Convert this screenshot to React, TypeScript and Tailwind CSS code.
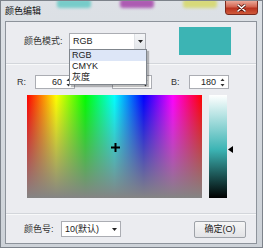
import React from "react";

const font = "font-['Liberation_Sans','Noto_Sans_CJK_SC',sans-serif]";

function Spinner() {
  return (
    <svg width="5" height="9" viewBox="0 0 5 9" className="shrink-0">
      <path d="M2.5 0.5 L4.5 3 L0.5 3 Z" fill="#333" />
      <path d="M0.5 6 L4.5 6 L2.5 8.5 Z" fill="#333" />
    </svg>
  );
}

function SpinField({ label, value }: { label: string; value: string }) {
  return (
    <div className="flex items-center">
      <span className="w-[18px] text-[9px] leading-none text-[#333]">{label}</span>
      <div className="w-[40px] h-[14px] bg-white border border-[#abadb3] flex items-center justify-end pr-[3px]">
        <span className="text-[9px] leading-none text-[#222] mr-[4px]">{value}</span>
        <Spinner />
      </div>
    </div>
  );
}

function DownArrow() {
  return (
    <svg width="5" height="3" viewBox="0 0 5 3">
      <path d="M0 0 L5 0 L2.5 3 Z" fill="#222" />
    </svg>
  );
}

export default function App() {
  return (
    <div className={`w-[263px] h-[248px] relative overflow-hidden flex flex-col border border-[#7d838b] bg-[linear-gradient(to_bottom,#dde1e6,#cdd2d8)] ${font}`}>
      {/* title bar */}
      <div className="h-[20px] shrink-0 relative">
        <div className="absolute left-[56px] top-[-2px] w-[34px] h-[9px] rounded-[3px] bg-[#5ec8c3] blur-[1.5px] opacity-80" />
        <div className="absolute left-[119px] top-[-2px] w-[34px] h-[9px] rounded-[3px] bg-[#a23aa6] blur-[1.5px] opacity-80" />
        <div className="absolute left-[182px] top-[-2px] w-[34px] h-[9px] rounded-[3px] bg-[#d6d860] blur-[1.5px] opacity-80" />
        <span className="absolute left-[4px] top-[4px] text-[9px] leading-[12px] text-[#111]">颜色编辑</span>
        <div className="absolute right-[4px] top-[-1px] w-[33px] h-[15px] rounded-b-[3px] border border-[#7a2a1e] bg-[linear-gradient(to_bottom,#eba898,#d26450_45%,#b9321f_55%,#cf5a3a)] flex items-center justify-center">
          <svg width="9" height="8" viewBox="0 0 9 8">
            <path d="M1 1 L8 7 M8 1 L1 7" stroke="#5a1a10" strokeWidth="3" strokeLinecap="round" />
            <path d="M1 1 L8 7 M8 1 L1 7" stroke="#ffffff" strokeWidth="1.6" strokeLinecap="round" />
          </svg>
        </div>
      </div>

      {/* client area */}
      <div className="flex-1 ml-[4px] mr-[5px] mb-[3px] border border-[#8d939b] bg-[#ebecf0] flex flex-col relative">
        {/* mode row */}
        <div className="h-[41px] shrink-0 flex items-start pl-[18px]">
          <div className="flex items-center mt-[11px]">
            <span className="text-[9px] leading-none text-[#333] w-[45px]">颜色模式:</span>
            <div className="w-[77px] h-[17px] bg-white border border-[#abadb3] flex items-center">
              <span className="flex-1 pl-[3px] text-[9px] leading-none text-[#222]">RGB</span>
              <div className="w-[11px] h-full border-l border-[#dfe2e6] bg-[linear-gradient(to_bottom,#f4f5f7,#e3e6ea)] flex items-center justify-center">
                <DownArrow />
              </div>
            </div>
          </div>
          <div className="ml-[33px] mt-[5px] w-[52px] h-[28px] bg-[#3cb4b4]" />
        </div>
        <div className="h-px shrink-0 bg-[#d3d6db]" />
        <div className="h-px shrink-0 bg-[#f8f9fa]" />

        {/* rgb values + picker */}
        <div className="flex-1 flex flex-col pl-[11px] pt-[10px]">
          <div className="flex items-center gap-[19px]">
            <SpinField label="R:" value="60" />
            <SpinField label="G:" value="180" />
            <SpinField label="B:" value="180" />
          </div>
          <div className="flex mt-[6px] pl-[10px]">
            <div className="relative w-[175px] h-[103px] bg-[linear-gradient(to_bottom,rgba(128,128,128,0),#848484),linear-gradient(to_right,#ff0000,#ffff00,#00ff00,#00ffff,#0000ff,#ff00ff,#ff0000)]">
              <svg width="9" height="9" viewBox="0 0 9 9" className="absolute left-[84px] top-[48px]">
                <path d="M4.5 0 V9 M0 4.5 H9" stroke="#000" strokeWidth="2" />
              </svg>
            </div>
            <div className="relative ml-[7px] w-[18px] h-[103px] bg-[linear-gradient(to_bottom,#ffffff,#3cb4b4_53%,#000000)]">
              <svg width="5" height="7" viewBox="0 0 5 7" className="absolute left-[19px] top-[51px]">
                <path d="M5 0 L0 3.5 L5 7 Z" fill="#000" />
              </svg>
            </div>
          </div>
        </div>
        <div className="h-px shrink-0 bg-[#d3d6db]" />
        <div className="h-px shrink-0 bg-[#f8f9fa]" />

        {/* footer */}
        <div className="h-[28px] shrink-0 flex items-center justify-between pl-[18px] pr-[10px]">
          <div className="flex items-center">
            <span className="text-[9px] leading-none text-[#333] w-[37px]">颜色号:</span>
            <div className="w-[60px] h-[16px] bg-white border border-[#abadb3] flex items-center pl-[3px] pr-[3px]">
              <span className="flex-1 text-[9px] leading-none text-[#222]">10(默认)</span>
              <DownArrow />
            </div>
          </div>
          <button className="w-[52px] h-[17px] rounded-[2px] border border-[#9ea2a8] bg-[linear-gradient(to_bottom,#f6f6f6,#e2e3e6)] text-[9px] leading-none text-[#222]">
            确定(O)
          </button>
        </div>

        {/* open dropdown list */}
        <div className="absolute left-[63px] top-[27px] w-[78px] h-[36px] bg-white border border-[#7f858c] shadow-[2px_2px_1px_rgba(0,0,0,0.25)] flex flex-col">
          <div className="h-[11px] bg-[#dde6f7] pl-[2px] flex items-center text-[9px] leading-none text-[#222]">RGB</div>
          <div className="h-[11px] pl-[2px] flex items-center text-[9px] leading-none text-[#222]">CMYK</div>
          <div className="h-[11px] pl-[2px] flex items-center text-[9px] leading-none text-[#222]">灰度</div>
        </div>
      </div>
    </div>
  );
}
